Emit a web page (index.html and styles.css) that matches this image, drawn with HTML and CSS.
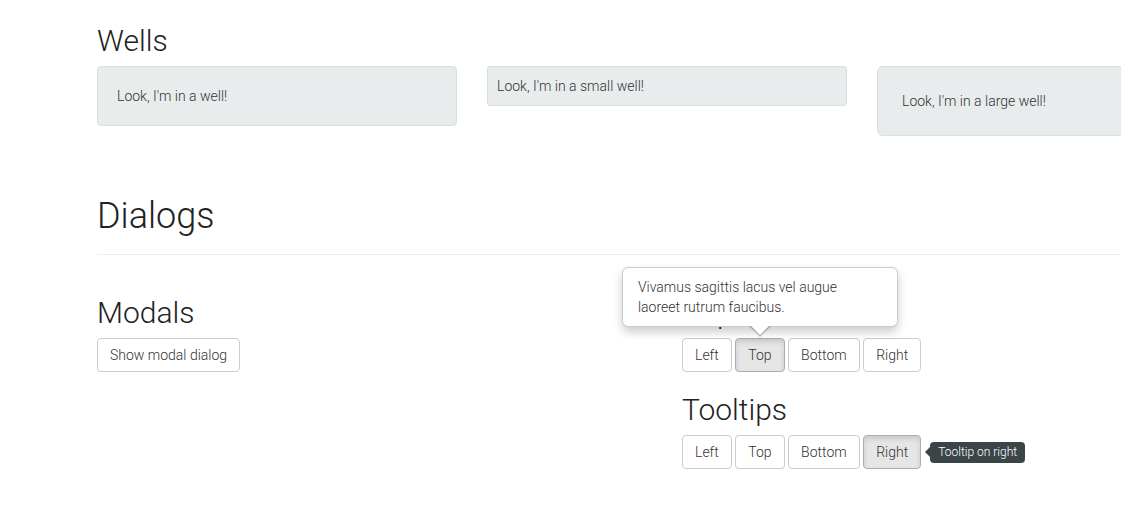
FILE: index.html
```html
<!DOCTYPE html>
<html>
<head>
<meta charset="utf-8">
<link rel="stylesheet" href="styles.css">
</head>
<body>
<div class="container">
  <h2 class="first">Wells</h2>
  <div class="row3">
    <div class="well">Look, I'm in a well!</div>
    <div class="well well-sm">Look, I'm in a small well!</div>
    <div class="well well-lg">Look, I'm in a large well!</div>
  </div>

  <div class="page-header">
    <h1>Dialogs</h1>
  </div>

  <div class="row2">
    <div class="col">
      <h2>Modals</h2>
      <button class="btn">Show modal dialog</button>
    </div>
    <div class="col">
      <h2>Popovers</h2>
      <div class="btn-line">
        <button class="btn">Left</button>
        <span class="anchor"><button class="btn active">Top</button><div class="popover"><div class="popover-content">Vivamus sagittis lacus vel augue laoreet rutrum faucibus.</div><span class="popover-arrow"></span></div></span>
        <button class="btn">Bottom</button>
        <button class="btn">Right</button>
      </div>
      <h2>Tooltips</h2>
      <div class="btn-line">
        <button class="btn">Left</button>
        <button class="btn">Top</button>
        <button class="btn">Bottom</button>
        <span class="anchor"><button class="btn active">Right</button><div class="tooltip"><span class="tooltip-arrow"></span>Tooltip on right</div></span>
      </div>
    </div>
  </div>
</div>
</body>
</html>
```
FILE: styles.css
```css
html, body {
  margin: 0;
  padding: 0;
  overflow: hidden;
  background: #fff;
}
body {
  font-family: Roboto, "Liberation Sans", sans-serif;
  font-weight: 300;
  font-size: 14px;
  line-height: 20px;
  color: #333;
}
.container {
  width: 1140px;
  margin-left: 97px;
  padding-top: 4px;
}
h1, h2 {
  font-weight: 300;
  color: #222;
  margin: 20px 0 9px;
  padding-top: 1px;
  line-height: 1.1;
}
h1 { font-size: 36px; }
h2 { font-size: 30px; }
.first { margin-top: 19px; }
.row3 {
  display: grid;
  grid-template-columns: 360px 360px 360px;
  column-gap: 30px;
  align-items: start;
}
.well {
  background: #e9ecec;
  border: 1px solid #dcdfe0;
  border-radius: 4px;
  padding: 19px;
  margin-bottom: 20px;
}
.well-sm { padding: 9px; border-radius: 3px; }
.well-lg { padding: 24px; border-radius: 6px; }

.page-header {
  margin: 39px 0 20px;
  padding-bottom: 9px;
  border-bottom: 1px solid #eceeef;
}
.page-header h1 {
  margin-top: 0;
  padding-top: 2px;
  margin-bottom: 8px;
}

.row2 {
  display: grid;
  grid-template-columns: 555px 555px;
  column-gap: 30px;
}
.btn {
  font-family: inherit;
  font-weight: 300;
  font-size: 14px;
  line-height: 20px;
  color: #333;
  background: #fff;
  border: 1px solid #ccc;
  border-radius: 4px;
  padding: 6px 12px;
  margin: 0;
  cursor: pointer;
  vertical-align: middle;
}
.btn.active {
  background: #e6e6e6;
  border-color: #adadad;
  box-shadow: inset 0 3px 5px rgba(0,0,0,.125);
}
.btn-line {
  display: flex;
  gap: 3.5px;
}
.anchor {
  position: relative;
  display: inline-block;
}
.popover {
  position: absolute;
  bottom: calc(100% + 11px);
  left: 50%;
  transform: translateX(-50%);
  width: 276px;
  box-sizing: border-box;
  background: #fff;
  border: 1px solid rgba(0,0,0,.2);
  border-radius: 6px;
  box-shadow: 0 5px 10px rgba(0,0,0,.2);
  z-index: 5;
}
.popover-content {
  padding: 9px 24px 9px 15px;
}
.popover-arrow {
  position: absolute;
  left: 50%;
  bottom: -11px;
  margin-left: -11px;
  width: 0;
  height: 0;
  border-left: 11px solid transparent;
  border-right: 11px solid transparent;
  border-top: 11px solid rgba(0,0,0,.25);
}
.popover-arrow::after {
  content: "";
  position: absolute;
  left: -10px;
  top: -12px;
  width: 0;
  height: 0;
  border-left: 10px solid transparent;
  border-right: 10px solid transparent;
  border-top: 10px solid #fff;
}
.tooltip {
  position: absolute;
  left: calc(100% + 9px);
  top: 7px;
  white-space: nowrap;
  background: #3b4548;
  color: #fff;
  font-size: 12px;
  line-height: 15px;
  padding: 3px 8px;
  border-radius: 4px;
  z-index: 5;
}
.tooltip-arrow {
  position: absolute;
  left: -5px;
  top: 50%;
  margin-top: -5px;
  width: 0;
  height: 0;
  border-top: 5px solid transparent;
  border-bottom: 5px solid transparent;
  border-right: 5px solid #3b4548;
}
```
